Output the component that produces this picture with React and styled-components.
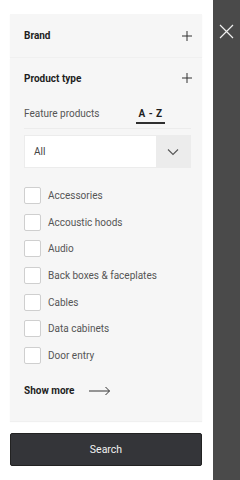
import React from "react";
import styled, { createGlobalStyle } from "styled-components";

const Global = createGlobalStyle`
  html, body { margin: 0; padding: 0; }
  body { font-family: Roboto, "Liberation Sans", Arial, sans-serif; background: #fff; }
  * { box-sizing: border-box; }
`;

const Screen = styled.div`
  display: flex;
  width: 240px;
  height: 480px;
  overflow: hidden;
`;

const Panel = styled.div`
  width: 213px;
  flex: none;
  background: #fff;
  padding: 14px 11px 0 10px;
  display: flex;
  flex-direction: column;
`;

const Overlay = styled.div`
  flex: 1;
  background: #4a4a4a;
  display: flex;
  justify-content: center;
  padding-top: 24px;
`;

const Card = styled.div`
  background: #f6f6f6;
  box-shadow: 0 1px 1px rgba(0, 0, 0, 0.06);
  padding: 0 9px 0 14px;
  margin-top: ${(p) => p.$mt || 0}px;
`;

const Header = styled.div`
  height: ${(p) => p.$h}px;
  display: flex;
  align-items: center;
  justify-content: space-between;
  font-size: 10px;
  font-weight: 700;
  color: #1e1e1e;
`;

const Tabs = styled.div`
  display: flex;
  align-items: flex-start;
  height: 31px;
  border-bottom: 1px solid #ececec;
  margin-right: 2px;
  padding-top: 10px;
`;

const Tab = styled.div`
  font-size: 10px;
  line-height: 12px;
  color: ${(p) => (p.$active ? "#1e1e1e" : "#555")};
  font-weight: ${(p) => (p.$active ? 700 : 400)};
  letter-spacing: ${(p) => (p.$active ? "0.5px" : "0")};
  margin-left: ${(p) => p.$ml || 0}px;
  padding: ${(p) => (p.$active ? "0 2px 2px" : "0")};
  border-bottom: ${(p) => (p.$active ? "2px solid #2f2f2f" : "none")};
`;

const Select = styled.div`
  margin-top: 6px;
  margin-right: 2px;
  height: 33px;
  display: flex;
  background: #fff;
  border: 1px solid #ececec;
`;

const SelectValue = styled.div`
  flex: 1;
  display: flex;
  align-items: center;
  padding-left: 9px;
  font-size: 10px;
  color: #444;
`;

const SelectBtn = styled.div`
  width: 34px;
  background: #ececec;
  display: flex;
  align-items: center;
  justify-content: center;
`;

const List = styled.div`
  margin-top: 19px;
  display: flex;
  flex-direction: column;
  gap: 9.67px;
`;

const Row = styled.label`
  display: flex;
  align-items: center;
  gap: 7px;
  font-size: 10px;
  color: #555;
`;

const Box = styled.span`
  width: 17px;
  height: 17px;
  border: 1px solid #cfcfcf;
  border-radius: 2px;
  background: #fff;
  flex: none;
`;

const More = styled.div`
  display: flex;
  align-items: center;
  gap: 14px;
  height: 40px;
  margin-top: 7px;
  margin-bottom: 10px;
  font-size: 10px;
  font-weight: 700;
  color: #1e1e1e;
`;

const SearchButton = styled.button`
  margin-top: 12px;
  height: 33px;
  width: 192px;
  background: #343539;
  border: 1px solid #222;
  border-radius: 2px;
  color: #f2f2f2;
  font-family: inherit;
  font-size: 10.5px;
`;

const Plus = () => (
  <svg width="12" height="12" viewBox="0 0 12 12">
    <path d="M6 1v10M1 6h10" stroke="#333" strokeWidth="1" />
  </svg>
);

const items = [
  "Accessories",
  "Accoustic hoods",
  "Audio",
  "Back boxes & faceplates",
  "Cables",
  "Data cabinets",
  "Door entry",
];

export default function App() {
  return (
    <>
      <Global />
      <Screen>
        <Panel>
          <Card>
            <Header $h={43}>
              <span>Brand</span>
              <Plus />
            </Header>
          </Card>
          <Card $mt={1}>
            <Header $h={40}>
              <span>Product type</span>
              <Plus />
            </Header>
            <Tabs>
              <Tab>Feature products</Tab>
              <Tab $active $ml={37}>A - Z</Tab>
            </Tabs>
            <Select>
              <SelectValue>All</SelectValue>
              <SelectBtn>
                <svg width="12" height="8" viewBox="0 0 12 8">
                  <path d="M1 1.5l5 5 5-5" fill="none" stroke="#555" strokeWidth="1.1" />
                </svg>
              </SelectBtn>
            </Select>
            <List>
              {items.map((t) => (
                <Row key={t}>
                  <Box />
                  {t}
                </Row>
              ))}
            </List>
            <More>
              <span>Show more</span>
              <svg width="22" height="10" viewBox="0 0 22 10">
                <path d="M0 5h20.5M16.5 1l4 4-4 4" fill="none" stroke="#333" strokeWidth="1" />
              </svg>
            </More>
          </Card>
          <SearchButton>Search</SearchButton>
        </Panel>
        <Overlay>
          <svg width="15" height="15" viewBox="0 0 15 15">
            <path d="M1 1l13 13M14 1L1 14" stroke="#f0f0f0" strokeWidth="1.2" />
          </svg>
        </Overlay>
      </Screen>
    </>
  );
}
